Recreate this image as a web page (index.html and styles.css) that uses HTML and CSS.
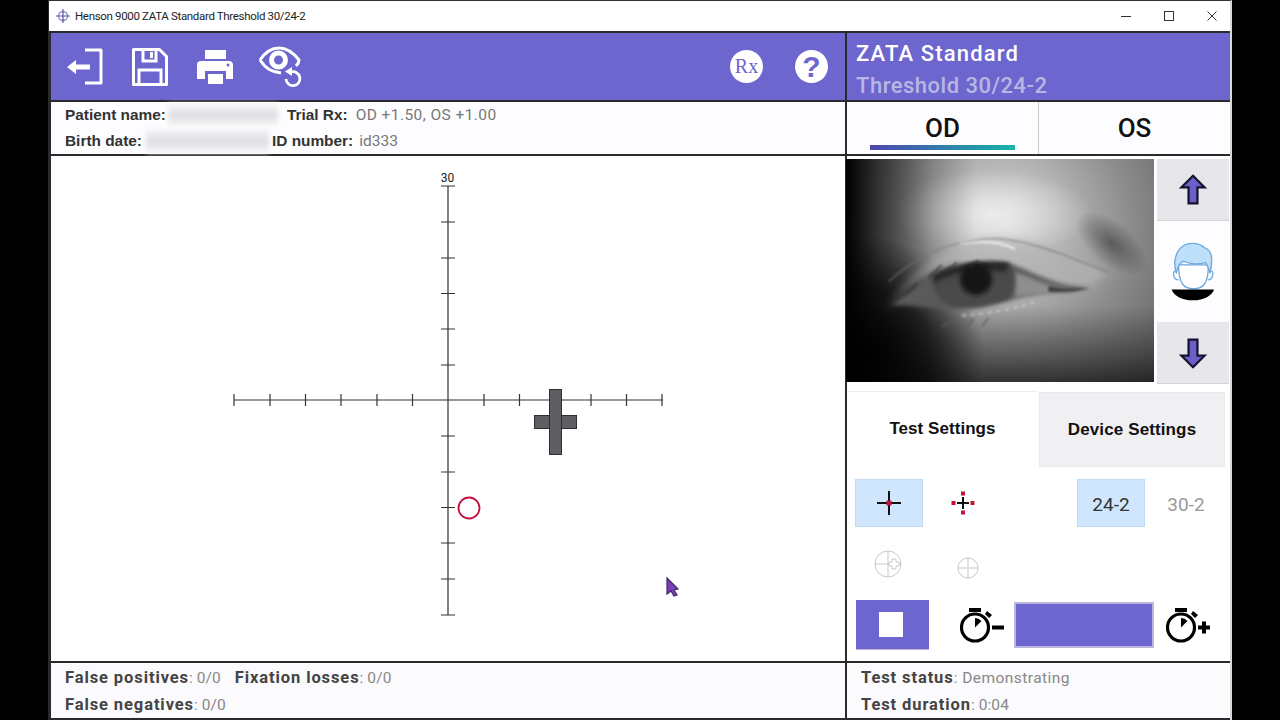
FILE: index.html
```html
<!DOCTYPE html>
<html lang="en">
<head>
<meta charset="utf-8">
<title>Henson 9000 ZATA Standard Threshold 30/24-2</title>
<link rel="stylesheet" href="styles.css">
</head>
<body>
<div class="window">
  <header class="titlebar">
    <svg class="app-icon" viewBox="0 0 16 16"><circle cx="8" cy="8" r="4.5" fill="none" stroke="#8d86c8" stroke-width="1.3"/><path d="M8 1v14M1 8h14" stroke="#5d55a8" stroke-width="1.2"/></svg>
    <span class="title-text">Henson 9000 ZATA Standard Threshold 30/24-2</span>
    <div class="win-controls">
      <svg viewBox="0 0 12 12"><path d="M1 6.5h10" stroke="#333" stroke-width="1"/></svg>
      <svg viewBox="0 0 12 12"><rect x="1.5" y="1.5" width="9" height="9" fill="none" stroke="#333" stroke-width="1"/></svg>
      <svg viewBox="0 0 12 12"><path d="M1.5 1.5l9 9M10.5 1.5l-9 9" stroke="#333" stroke-width="1"/></svg>
    </div>
  </header>
  <div class="main">
    <div class="toolbar">
      <svg class="tool" viewBox="0 0 42 44"><path d="M21 5h16v33H21" fill="none" stroke="#fff" stroke-width="3" stroke-linejoin="round"/><path d="M3 22l9-7v4.500h14v5H12V29z" fill="#fff"/></svg>
      <svg class="tool" viewBox="0 0 42 44"><path d="M4.500 4.500h26l7 7v28h-33z" fill="none" stroke="#fff" stroke-width="3" stroke-linejoin="round"/><path d="M14 5v11h13V5M10 39V25h22v14" fill="none" stroke="#fff" stroke-width="3"/><rect x="21" y="7" width="3" height="6" fill="#fff"/></svg>
      <svg class="tool tool-print" viewBox="0 0 42 44"><path d="M10 5h21v9H10zM6 16h29a4 4 0 0 1 3 3v15h-7v-8H10v8H2V20a4 4 0 0 1 4-4zM13 29h15v10H13z" fill="#fff"/><circle cx="33" cy="20" r="1.500" fill="#6d66cf"/></svg>
      <svg class="tool tool-eye" viewBox="0 0 44 44"><path d="M2 15C8 6 14 3 21 3s13 3 20 12c0 2-1 4-3 6" fill="none" stroke="#fff" stroke-width="3" stroke-linejoin="round"/><path d="M2 15c6 9 12 12 21 13" fill="none" stroke="#fff" stroke-width="3"/><circle cx="20.500" cy="15" r="7" fill="none" stroke="#fff" stroke-width="5"/><path d="M33 27A7 7 0 1 1 28 34" fill="none" stroke="#fff" stroke-width="2.800"/><path d="M34 22v9l-7-4.500z" fill="#fff"/></svg>
      <div class="round-icon rx">Rx</div>
      <div class="round-icon help">?</div>
    </div>
    <div class="test-head">
      <div class="test-name">ZATA Standard</div>
      <div class="test-sub">Threshold 30/24-2</div>
    </div>
    <div class="info">
      <div class="info-line">
        <span class="lbl">Patient name:</span><span class="redact redact-name"></span><span class="lbl">Trial Rx:</span><span class="val val-rx">OD +1.50, OS +1.00</span>
      </div>
      <div class="info-line">
        <span class="lbl">Birth date:</span><span class="redact redact-date"></span><span class="lbl">ID number:</span><span class="val val-id">id333</span>
      </div>
    </div>
    <div class="eye-tabs">
      <div class="eye-tab eye-active">OD<span class="eye-bar"></span></div>
      <div class="eye-tab">OS</div>
    </div>
    <div class="chart">
      <svg viewBox="51 156 794 505" class="chart-svg">
        <path class="axis" d="M234 400H663M448 186V615M234 394v12M270 394v12M305.500 394v12M341 394v12M377 394v12M412.500 394v12M484 394v12M519.500 394v12M591 394v12M626.500 394v12M662 394v12M441 222h14M441 258h14M441 293.500h14M441 329h14M441 365h14M441 436h14M441 472h14M441 507.500h14M441 543h14M441 579h14M441 615h14M441 186h14"/>
        <text x="447.500" y="182" class="axis-label">30</text>
        <rect x="534.500" y="415.500" width="42" height="13" class="stim"/>
        <rect x="549.500" y="389.500" width="12" height="65" class="stim"/>
        <circle cx="469" cy="508" r="10.500" class="blind"/>
        <path d="M667 578l11 11-4 1 3 5-3 1-3-5-4 3z" fill="#7d3fb8" stroke="#3c2a60" stroke-width="1.200"/>
      </svg>
    </div>
    <div class="side">
      <div class="camera-row">
        <svg class="camera" viewBox="3 12 924 669" preserveAspectRatio="none">
          <defs>
            <radialGradient id="skin" gradientUnits="userSpaceOnUse" cx="470" cy="210" r="660">
              <stop offset="0" stop-color="#d8d8d8"/><stop offset=".28" stop-color="#b6b6b6"/><stop offset=".6" stop-color="#8a8a8a"/><stop offset="1" stop-color="#5c5c5c"/>
            </radialGradient>
            <linearGradient id="dark-left" x1="0" x2="1" y1="0" y2="0">
              <stop offset="0" stop-color="#000"/><stop offset=".1" stop-color="#000" stop-opacity=".65"/><stop offset=".28" stop-color="#000" stop-opacity=".2"/><stop offset=".42" stop-color="#000" stop-opacity="0"/>
            </linearGradient>
            <linearGradient id="dark-bottom" x1="0" x2="0" y1="0" y2="1">
              <stop offset=".66" stop-color="#000" stop-opacity="0"/><stop offset=".88" stop-color="#000" stop-opacity=".35"/><stop offset="1" stop-color="#000" stop-opacity=".6"/>
            </linearGradient>
            <radialGradient id="dark-corner" gradientUnits="userSpaceOnUse" cx="60" cy="600" r="360">
              <stop offset="0" stop-color="#000" stop-opacity=".95"/><stop offset=".55" stop-color="#000" stop-opacity=".65"/><stop offset="1" stop-color="#000" stop-opacity="0"/>
            </radialGradient>
            <radialGradient id="shadow-right" gradientUnits="userSpaceOnUse" cx="0" cy="0" r="1" gradientTransform="translate(800 265) rotate(40) scale(130 65)">
              <stop offset="0" stop-color="#333" stop-opacity=".6"/><stop offset="1" stop-color="#333" stop-opacity="0"/>
            </radialGradient>
            <radialGradient id="glow" gradientUnits="userSpaceOnUse" cx="0" cy="0" r="1" gradientTransform="translate(440 175) scale(300 130)">
              <stop offset="0" stop-color="#f2f2f2" stop-opacity=".8"/><stop offset="1" stop-color="#f2f2f2" stop-opacity="0"/>
            </radialGradient>
            <filter id="b12" filterUnits="userSpaceOnUse" x="-300" y="-300" width="1600" height="1300"><feGaussianBlur stdDeviation="12"/></filter>
            <filter id="b7" filterUnits="userSpaceOnUse" x="-300" y="-300" width="1600" height="1300"><feGaussianBlur stdDeviation="7"/></filter>
            <filter id="b3" filterUnits="userSpaceOnUse" x="-300" y="-300" width="1600" height="1300"><feGaussianBlur stdDeviation="3"/></filter>
          </defs>
          <rect x="3" y="12" width="924" height="669" fill="url(#skin)"/>
          <rect x="3" y="12" width="924" height="669" fill="url(#shadow-right)"/>
          <rect x="3" y="12" width="924" height="669" fill="url(#glow)"/>
          <rect x="3" y="12" width="924" height="669" fill="url(#dark-bottom)"/>
          <rect x="3" y="12" width="924" height="669" fill="url(#dark-left)"/>
          <rect x="3" y="12" width="924" height="669" fill="url(#dark-corner)"/>
          <path d="M120 470C220 320 350 248 470 250s220 50 320 105l-60 45C620 400 500 325 340 315 260 325 180 400 120 470z" fill="#b2b2b2" opacity=".7" filter="url(#b12)"/>
          <path d="M345 264C410 254 470 262 510 282" fill="none" stroke="#e6e6e6" stroke-width="8" filter="url(#b3)"/>
          <path d="M130 380C220 300 320 252 460 250 580 262 680 310 790 352" fill="none" stroke="#777" stroke-width="4" opacity=".7" filter="url(#b3)"/>
          <path d="M140 450L260 360C300 325 420 310 490 325 560 345 620 395 735 398 700 410 640 412 600 412 520 425 440 455 380 460 300 465 210 450 140 450z" fill="#5a5a5a" filter="url(#b7)"/>
          <path d="M510 350C560 368 620 398 690 404 640 416 560 420 510 428z" fill="#8e8e8e" filter="url(#b7)"/>
          <path d="M610 392C650 402 690 402 732 398 690 412 640 412 610 410z" fill="#454545" filter="url(#b3)"/>
          <path d="M265 365C320 335 420 320 490 328 515 350 515 400 490 432 440 450 380 462 320 455 280 440 255 400 265 365z" fill="#4a4a4a" filter="url(#b7)"/>
          <path d="M265 360C320 330 420 315 495 325L480 350C400 340 320 350 265 385z" fill="#262626" filter="url(#b7)"/>
          <circle cx="393" cy="372" r="48" fill="#151515" filter="url(#b7)"/>
          <path d="M290 330L250 368M335 322L305 350M400 316L375 338M215 385L180 420" stroke="#333" stroke-width="4" filter="url(#b3)"/>
          <path d="M350 482C420 477 500 465 575 440" fill="none" stroke="#c8c8c8" stroke-width="5" stroke-dasharray="14 12" filter="url(#b3)"/>
          <path d="M290 515L335 492M365 520L385 492M410 515L430 490" stroke="#5c5c5c" stroke-width="4" filter="url(#b3)"/>
        </svg>
        <div class="cam-btns">
          <div class="cam-btn">
            <svg viewBox="0 0 30 36" class="arrow"><path d="M15 2L28 15H20V33H10V15H2z"/></svg>
          </div>
          <div class="cam-face">
            <svg viewBox="975 255 140 190" class="face">
              <path d="M990 350c-8-5-8 25 10 25M1098 350c8-5 8 25-10 25" fill="#fff" stroke="#6fa8dc" stroke-width="4"/>
              <path d="M1000 330c0 60 18 72 45 72s45-12 45-72z" fill="#fff" stroke="#6fa8dc" stroke-width="4"/>
              <path d="M993 355c-15-50 10-90 48-90 25 0 32 8 38 14 18 5 26 30 16 76-5-15-8-25-14-32-25 8-55 2-66-4-12 5-18 15-22 36z" fill="#bfe0fb" stroke="#6fa8dc" stroke-width="4" stroke-linejoin="round"/>
              <path d="M979 404h128c-6 18-30 33-64 33s-58-15-64-33z" fill="#000"/>
            </svg>
          </div>
          <div class="cam-btn">
            <svg viewBox="0 0 30 36" class="arrow"><path d="M15 34L28 21H20V3H10V21H2z"/></svg>
          </div>
        </div>
      </div>
      <div class="tabs">
        <div class="tab tab-active">Test Settings</div>
        <div class="tab tab-idle">Device Settings</div>
      </div>
      <div class="row row-one">
        <div class="seg seg-on">
          <svg viewBox="0 0 26 26" class="ico26"><path d="M13 1v24M1 13h24" stroke="#111" stroke-width="2"/><rect x="10.500" y="10.500" width="5" height="5" fill="#c41239"/></svg>
        </div>
        <div class="slot-fix">
          <svg viewBox="0 0 26 26" class="ico26"><path d="M13 7v12M7 13h12" stroke="#111" stroke-width="2"/><path d="M13 1.500v4M13 20.500v4M1.500 13h4M20.500 13h4" stroke="#c41239" stroke-width="4"/></svg>
        </div>
        <div class="seg seg-on seg-push seg-text">24-2</div>
        <div class="seg-off">30-2</div>
      </div>
      <div class="row row-two">
        <svg viewBox="0 0 30 30" class="ico-target"><circle cx="14" cy="15" r="13" fill="none" stroke="#c9c9c9" stroke-width="1"/><path d="M1 15h26M14 2v26" stroke="#c9c9c9" stroke-width="1"/><path d="M15 13h3v-3h4v3h3v4h-3v3h-4v-3h-3z" fill="#fff" stroke="#c9c9c9"/></svg>
        <svg viewBox="0 0 30 30" class="ico-small"><circle cx="15" cy="15" r="10" fill="none" stroke="#c9c9c9" stroke-width="1"/><path d="M5 15h20M15 5v20" stroke="#c9c9c9" stroke-width="1"/></svg>
      </div>
      <div class="row row-three">
        <div class="stop"><span class="stop-square"></span></div>
        <div class="slot-timer slot-minus">
          <svg viewBox="0 0 46 36" class="timer"><circle cx="15" cy="20.500" r="13.500" fill="none" stroke="#000" stroke-width="3.200"/><path d="M9 1h12v4H9zM27 4l5 4-3 3-4-4z" fill="#000"/><path d="M15 20.500V11a9.500 9.500 0 0 1 6.500 3z" fill="#000"/><path d="M32 18.500h12v4H32z" fill="#000"/></svg>
        </div>
        <div class="progress"></div>
        <div class="slot-timer slot-plus">
          <svg viewBox="0 0 46 36" class="timer"><circle cx="15" cy="20.500" r="13.500" fill="none" stroke="#000" stroke-width="3.200"/><path d="M9 1h12v4H9zM27 4l5 4-3 3-4-4z" fill="#000"/><path d="M15 20.500V11a9.500 9.500 0 0 1 6.500 3z" fill="#000"/><path d="M32 18.500h4v-4h4v4h4v4h-4v4h-4v-4h-4z" fill="#000"/></svg>
        </div>
      </div>
    </div>
    <div class="foot">
      <div class="foot-line"><b>False positives</b><span class="foot-val">: 0/0</span> <b class="foot-gap">Fixation losses</b><span class="foot-val">: 0/0</span></div>
      <div class="foot-line"><b>False negatives</b><span class="foot-val">: 0/0</span></div>
    </div>
    <div class="foot">
      <div class="foot-line"><b>Test status</b><span class="foot-wide">: Demonstrating</span></div>
      <div class="foot-line"><b>Test duration</b><span class="foot-val">: 0:04</span></div>
    </div>
  </div>
</div>
</body>
</html>
```
FILE: styles.css
```css
* { box-sizing: border-box; }
html, body { margin: 0; height: 720px; overflow: hidden; background: #000; }
body { padding-left: 48px; font-family: "Liberation Sans", Arial, sans-serif; }
.window { width: 1184px; height: 720px; background: #2a2a2e; border-top: 1px solid #333; border-left: 3px solid #2a2a2e; border-right: 2px solid #d8d8d8; display: flex; flex-direction: column; }
.titlebar { height: 30px; margin-left: -2px; background: #fff; display: flex; align-items: center; padding-left: 6px; flex: none; }
.app-icon { width: 16px; height: 16px; margin-right: 4px; }
.title-text { font-family: Roboto, sans-serif; font-size: 11.500px; letter-spacing: -.33px; color: #222; }
.win-controls { margin-left: auto; display: flex; gap: 31px; padding-right: 12px; }
.win-controls svg { width: 12px; height: 12px; display: block; }
.main { margin-top: 2px; display: grid; grid-template-columns: 794px 383px; grid-template-rows: 67px 52px 505px 55px; gap: 2px; }
.toolbar { background: #6d66cf; display: flex; align-items: center; padding-left: 13px; }
.tool { width: 42px; height: 44px; margin-right: 23px; display: block; }
.tool-print { margin-left: 1px; margin-right: 22px; }
.tool-eye { width: 44px; margin-left: -1px; }
.round-icon { width: 33px; height: 33px; border-radius: 50%; background: #fff; color: #6d66cf; display: flex; align-items: center; justify-content: center; flex: none; }
.rx { margin-left: auto; font-family: "Liberation Serif", serif; font-size: 20px; }
.help { margin-left: 32px; margin-right: 17px; font-size: 30px; font-weight: 700; }
.test-head { background: #6d66cf; padding: 6px 0 0 9px; font-family: Roboto, sans-serif; font-weight: 500; font-size: 22px; }
.test-name { color: #fff; line-height: 29px; letter-spacing: 1.150px; }
.test-sub { color: #b9b7e2; line-height: 35px; letter-spacing: .5px; }
.info { background: #fdfcfe; padding-left: 14px; color: #222; }
.info-line { height: 26px; display: flex; align-items: center; font-size: 15.400px; }
.lbl { font-weight: 700; color: #333; }
.val { font-family: Roboto, sans-serif; color: #777; font-size: 15.500px; }
.val-rx { margin-left: 8px; letter-spacing: .42px; }
.val-id { margin-left: 6px; }
.redact { display: block; background: linear-gradient(#f6f6f8, #dedee2 50%, #f6f6f8); filter: blur(2.500px); }
.redact-name { width: 110px; height: 22px; margin: 0 9px 0 2px; }
.redact-date { width: 123px; height: 24px; margin: 0 3px 0 4px; }
.eye-tabs { background: #fdfcfe; display: grid; grid-template-columns: 191px 1fr; }
.eye-tab { display: flex; justify-content: center; align-items: center; font-family: Roboto, sans-serif; font-weight: 500; font-size: 26px; color: #111; position: relative; }
.eye-tab + .eye-tab { border-left: 1px solid #ccc; }
.eye-bar { position: absolute; left: 23px; bottom: 4px; width: 145px; height: 5px; background: linear-gradient(90deg, #4f45ac, #14b5a8); }
.chart { background: #fff; }
.chart-svg { width: 794px; height: 505px; display: block; }
.axis { stroke: #333; stroke-width: 1.200; fill: none; }
.axis-label { font-family: Roboto, sans-serif; font-size: 12px; text-anchor: middle; fill: #222; }
.stim { fill: #5f5f63; stroke: #2e2e32; stroke-width: 1; }
.blind { fill: #fff; stroke: #c4103d; stroke-width: 1.800; }
.side { background: #fff; padding-top: 3px; }
.camera-row { display: flex; height: 225px; }
.camera { width: 308px; height: 223px; display: block; margin: 0 3px 0 -1px; flex: none; }
.cam-btns { width: 72px; display: flex; flex-direction: column; }
.cam-btn { height: 62px; background: #e7e6ea; border-bottom: 1px solid #d4d4d6; display: flex; align-items: center; justify-content: center; }
.cam-face { flex: 1; background: #fdfdff; display: flex; align-items: center; justify-content: center; }
.arrow { width: 30px; height: 32px; display: block; }
.arrow path { fill: #6b5fc9; stroke: #15122e; stroke-width: 2.500; stroke-linejoin: miter; }
.face { width: 47px; height: 63px; display: block; }
.tabs { margin-top: 7px; display: flex; height: 76px; }
.tab { display: flex; align-items: center; justify-content: center; font-weight: 700; font-size: 17px; color: #111; letter-spacing: .05px; }
.tab-active { width: 191px; padding-bottom: 2px; border-top: 1px solid #eee; }
.tab-idle { width: 186px; margin-left: 1px; margin-top: 1px; padding-top: 1px; background: #f0eff1; border: 1px solid #e8e8ea; letter-spacing: .12px; }
.row { display: flex; align-items: center; }
.row-one { margin-top: 12px; height: 48px; padding: 0 3px 0 8px; }
.seg { width: 68px; height: 48px; display: flex; align-items: center; justify-content: center; }
.seg-on { background: #cfe6fd; border: 1px solid #c2dcf4; }
.seg-push { margin-left: auto; }
.seg-text, .seg-off { font-family: Roboto, sans-serif; font-size: 19px; padding-top: 3px; }
.seg-text { color: #333; }
.seg-off { color: #9a9a9a; width: 82px; text-align: center; }
.slot-fix { width: 80px; display: flex; justify-content: center; }
.ico26 { width: 26px; height: 26px; display: block; }
.row-two { margin-top: 22px; height: 30px; padding-left: 27px; }
.ico-target { width: 30px; height: 30px; display: block; }
.ico-small { width: 30px; height: 30px; margin: 8px 0 0 49px; display: block; }
.row-three { margin-top: 21px; height: 50px; padding-left: 9px; }
.stop { width: 73px; height: 50px; background: #6d66cf; border-bottom: 1px solid #b9b5dc; display: flex; align-items: center; justify-content: center; padding-right: 4px; }
.stop-square { width: 24px; height: 25px; background: #fff; display: block; }
.slot-timer { display: flex; height: 50px; align-items: center; justify-content: center; }
.slot-minus { width: 85px; padding-left: 22px; }
.slot-plus { width: 76px; padding-right: 6px; }
.timer { width: 46px; height: 36px; display: block; }
.progress { width: 140px; height: 46px; background: #6d66cf; border: 2px solid #bab6de; }
.foot { background: #fbfafc; padding-left: 14px; font-family: Roboto, sans-serif; font-size: 15.500px; color: #888; }
.foot-line { height: 27px; line-height: 29px; }
.foot b { color: #444; font-weight: 700; font-size: 16.500px; letter-spacing: .9px; }
.foot-val { letter-spacing: .1px; }
.foot-wide { letter-spacing: .45px; }
.foot-gap { margin-left: 10px; }
```
